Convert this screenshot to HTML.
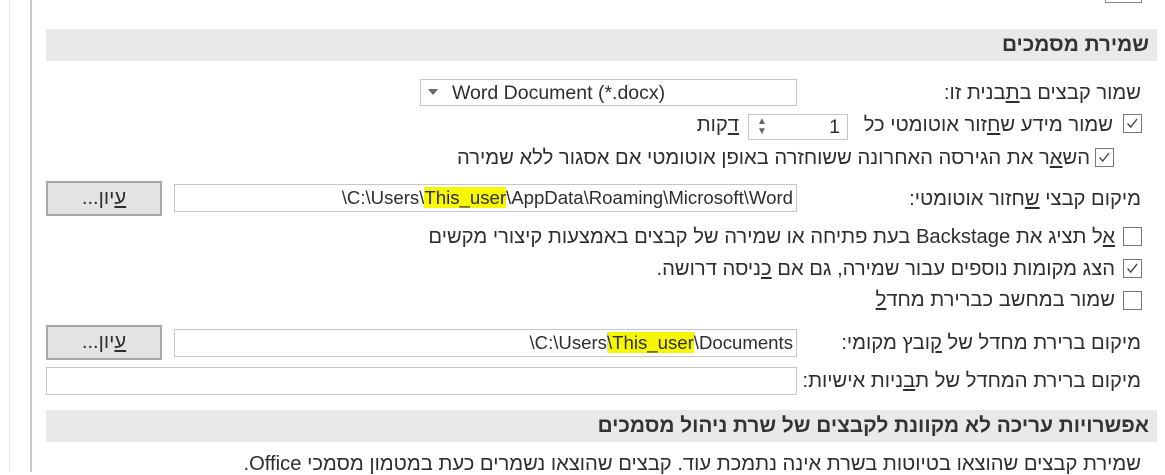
<!DOCTYPE html>
<html><head><meta charset="utf-8"><style>
body{margin:0;width:1165px;height:472px;overflow:hidden;background:#fff;position:relative;font-family:"Liberation Sans","DejaVu Sans",sans-serif;font-size:20.2px;color:#2e2e2e}
.a{position:absolute}
.t{position:absolute;direction:rtl;white-space:nowrap;line-height:22px}
.band{position:absolute;left:46px;width:1111px;background:#e9e9e9;height:32px}
.band .t{font-weight:bold;right:8px;top:5px;color:#333;font-size:20.8px}
.box{position:absolute;background:#fff;border:1px solid #c6c6c6;box-sizing:border-box}
.cb{position:absolute;width:19px;height:19px;border:1px solid #777;box-sizing:border-box;background:#fff}
.btn{position:absolute;left:46px;width:116px;height:35px;background:#e3e3e3;border:2px solid #a8a8a8;box-sizing:border-box;text-align:center;line-height:31px;direction:rtl}
.hl{background:#f7f700}
.p{font-size:18.6px}
.w{font-size:19.5px}
u{text-decoration:underline}
</style></head><body>
<div class="a" style="left:9px;top:0;width:1px;height:472px;background:#e6e6e6"></div>
<div class="a" style="left:30px;top:0;width:2px;height:472px;background:#c9c9c9"></div>
<div class="a" style="left:1105px;top:0;width:37px;height:3px;border:1px solid #889;border-top:none;box-sizing:border-box"></div>

<div class="band" style="top:29px"><div class="t">שמירת מסמכים</div></div>

<div class="t" style="right:24px;top:82px">שמור קבצים ב<u>ת</u>בנית זו:</div>
<div class="box" style="left:420px;top:79px;width:377px;height:27px"><span class="a" style="left:7px;top:9px;width:0;height:0;border-left:5px solid transparent;border-right:5px solid transparent;border-top:6px solid #666"></span><span class="a w" style="left:31px;top:2px;white-space:nowrap">Word Document (*.docx)</span></div>

<svg class="cb" style="left:1123px;top:114px" viewBox="0 0 19 19"><path d="M4 9.5 L7.5 13.5 L14.5 4.5" stroke="#444" stroke-width="1.5" fill="none"/></svg>
<div class="t" style="right:52px;top:114px">שמור מידע ש<u>ח</u>זור אוטומטי כל</div>
<div class="box" style="left:748px;top:114px;width:100px;height:26px"><span class="a" style="left:8px;top:2px;font-size:10px;line-height:10px;color:#666">▲<br>▼</span><span class="a w" style="right:7px;top:1px">1</span></div>
<div class="t" style="right:426px;top:114px"><u>ד</u>קות</div>

<svg class="cb" style="left:1095px;top:148px" viewBox="0 0 19 19"><path d="M4 9.5 L7.5 13.5 L14.5 4.5" stroke="#444" stroke-width="1.5" fill="none"/></svg>
<div class="t" style="right:75px;top:147px">הש<u>א</u>ר את הגירסה האחרונה ששוחזרה באופן אוטומטי אם אסגור ללא שמירה</div>

<div class="t" style="right:24px;top:188px">מיקום קבצי <u>ש</u>חזור אוטומטי:</div>
<div class="box" style="left:174px;top:184px;width:623px;height:28px"><span class="a p" style="right:3px;top:2px;white-space:nowrap">\C:\Users\<span class="hl">This_user</span>\AppData\Roaming\Microsoft\Word</span></div>
<div class="btn" style="top:181px"><u>ע</u>יון...</div>

<div class="cb" style="left:1123px;top:227px"></div>
<div class="t" style="right:50px;top:226px"><u>א</u>ל תציג את Backstage בעת פתיחה או שמירה של קבצים באמצעות קיצורי מקשים</div>

<svg class="cb" style="left:1123px;top:259px" viewBox="0 0 19 19"><path d="M4 9.5 L7.5 13.5 L14.5 4.5" stroke="#444" stroke-width="1.5" fill="none"/></svg>
<div class="t" style="right:50px;top:258px">הצג מקומות נוספים עבור שמירה, גם אם <u>כ</u>ניסה דרושה.</div>

<div class="cb" style="left:1123px;top:291px"></div>
<div class="t" style="right:50px;top:289px">שמור במחשב כברירת מחד<u>ל</u></div>

<div class="t" style="right:24px;top:332px">מיקום ברירת מחדל של <u>ק</u>ובץ מקומי:</div>
<div class="box" style="left:174px;top:329px;width:623px;height:28px"><span class="a p" style="right:3px;top:2px;white-space:nowrap">\C:\Users<span class="hl">\This_user</span>\Documents</span></div>
<div class="btn" style="top:325px"><u>ע</u>יון...</div>

<div class="t" style="right:24px;top:370px">מיקום ברירת המחדל של ת<u>ב</u>ניות אישיות:</div>
<div class="box" style="left:46px;top:367px;width:751px;height:28px"></div>

<div class="band" style="top:410px"><div class="t">אפשרויות עריכה לא מקוונת לקבצים של שרת ניהול מסמכים</div></div>

<div class="t" style="right:24px;top:453px">שמירת קבצים שהוצאו בטיוטות בשרת אינה נתמכת עוד. קבצים שהוצאו נשמרים כעת במטמון מסמכי Office.</div>
</body></html>
